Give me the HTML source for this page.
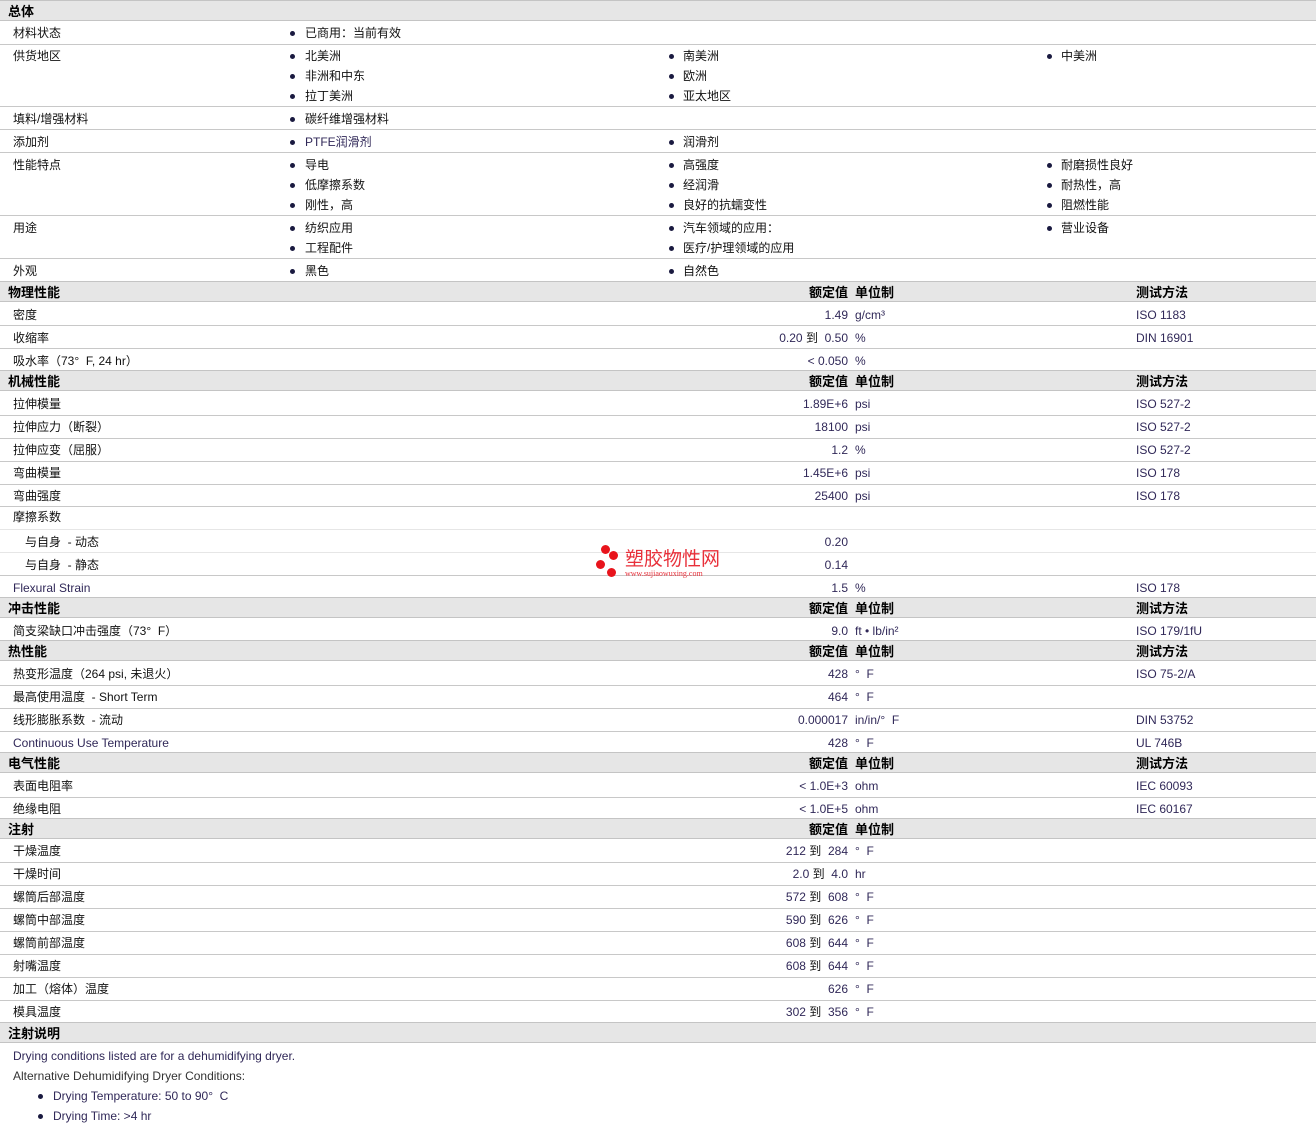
<!DOCTYPE html>
<html><head><meta charset="utf-8">
<style>
*{margin:0;padding:0;box-sizing:border-box}
body{width:1316px;height:1126px;background:#fff;position:relative;overflow:hidden;font-family:"Liberation Sans","Noto Sans CJK SC",sans-serif;font-size:12px;color:#111}
.h{position:absolute;left:0;width:1316px;height:21px;background:#e6e6e6;border-top:1px solid #c4c4c4;border-bottom:1px solid #c4c4c4}
.l{position:absolute;left:0;width:1316px;height:0;border-top:1px solid #c8c8c8}
.ll{position:absolute;left:0;width:1316px;height:0;border-top:1px solid #e6e6e6}
.t{position:absolute;line-height:14px;white-space:nowrap;margin-top:1px}
.b{font-weight:bold;font-size:13px;color:#000}
.v{color:#302858}
.r{text-align:right;right:468px}
.u{left:855px;color:#302858}
.m{left:1136px;color:#302858}
.bl{position:absolute;width:5px;height:5px;border-radius:50%;background:#1a1a40;margin-top:1px}
</style></head><body>
<div class="h" style="top:0"></div>
<div class="t b" style="top:4px;left:8px">总体</div>

<div class="t" style="top:25px;left:13px">材料状态</div>
<div class="bl" style="top:30px;left:290px"></div><div class="t" style="top:25px;left:305px">已商用：当前有效</div>
<div class="l" style="top:44px"></div>
<div class="t" style="top:48px;left:13px">供货地区</div>
<div class="bl" style="top:53px;left:290px"></div><div class="t" style="top:48px;left:305px">北美洲</div>
<div class="bl" style="top:73px;left:290px"></div><div class="t" style="top:68px;left:305px">非洲和中东</div>
<div class="bl" style="top:93px;left:290px"></div><div class="t" style="top:88px;left:305px">拉丁美洲</div>
<div class="bl" style="top:53px;left:669px"></div><div class="t" style="top:48px;left:683px">南美洲</div>
<div class="bl" style="top:73px;left:669px"></div><div class="t" style="top:68px;left:683px">欧洲</div>
<div class="bl" style="top:93px;left:669px"></div><div class="t" style="top:88px;left:683px">亚太地区</div>
<div class="bl" style="top:53px;left:1047px"></div><div class="t" style="top:48px;left:1061px">中美洲</div>
<div class="l" style="top:106px"></div>
<div class="t" style="top:111px;left:13px">填料/增强材料</div>
<div class="bl" style="top:116px;left:290px"></div><div class="t" style="top:111px;left:305px">碳纤维增强材料</div>
<div class="l" style="top:129px"></div>
<div class="t" style="top:134px;left:13px">添加剂</div>
<div class="bl" style="top:139px;left:290px"></div><div class="t v" style="top:134px;left:305px">PTFE润滑剂</div>
<div class="bl" style="top:139px;left:669px"></div><div class="t" style="top:134px;left:683px">润滑剂</div>
<div class="l" style="top:152px"></div>
<div class="t" style="top:157px;left:13px">性能特点</div>
<div class="bl" style="top:162px;left:290px"></div><div class="t" style="top:157px;left:305px">导电</div>
<div class="bl" style="top:182px;left:290px"></div><div class="t" style="top:177px;left:305px">低摩擦系数</div>
<div class="bl" style="top:202px;left:290px"></div><div class="t" style="top:197px;left:305px">刚性，高</div>
<div class="bl" style="top:162px;left:669px"></div><div class="t" style="top:157px;left:683px">高强度</div>
<div class="bl" style="top:182px;left:669px"></div><div class="t" style="top:177px;left:683px">经润滑</div>
<div class="bl" style="top:202px;left:669px"></div><div class="t" style="top:197px;left:683px">良好的抗蠕变性</div>
<div class="bl" style="top:162px;left:1047px"></div><div class="t" style="top:157px;left:1061px">耐磨损性良好</div>
<div class="bl" style="top:182px;left:1047px"></div><div class="t" style="top:177px;left:1061px">耐热性，高</div>
<div class="bl" style="top:202px;left:1047px"></div><div class="t" style="top:197px;left:1061px">阻燃性能</div>
<div class="l" style="top:215px"></div>
<div class="t" style="top:220px;left:13px">用途</div>
<div class="bl" style="top:225px;left:290px"></div><div class="t" style="top:220px;left:305px">纺织应用</div>
<div class="bl" style="top:245px;left:290px"></div><div class="t" style="top:240px;left:305px">工程配件</div>
<div class="bl" style="top:225px;left:669px"></div><div class="t" style="top:220px;left:683px">汽车领域的应用：</div>
<div class="bl" style="top:245px;left:669px"></div><div class="t" style="top:240px;left:683px">医疗/护理领域的应用</div>
<div class="bl" style="top:225px;left:1047px"></div><div class="t" style="top:220px;left:1061px">营业设备</div>
<div class="l" style="top:258px"></div>
<div class="t" style="top:263px;left:13px">外观</div>
<div class="bl" style="top:268px;left:290px"></div><div class="t" style="top:263px;left:305px">黑色</div>
<div class="bl" style="top:268px;left:669px"></div><div class="t" style="top:263px;left:683px">自然色</div>

<div class="h" style="top:281px"></div>
<div class="t b" style="top:285px;left:8px">物理性能</div>
<div class="t b r" style="top:285px">额定值</div><div class="t b" style="top:285px;left:855px">单位制</div><div class="t b" style="top:285px;left:1136px">测试方法</div>
<div class="t" style="top:307px;left:13px">密度</div><div class="t v r" style="top:307px">1.49</div><div class="t u" style="top:307px">g/cm³</div><div class="t m" style="top:307px">ISO 1183</div>
<div class="l" style="top:325px"></div>
<div class="t" style="top:330px;left:13px">收缩率</div><div class="t v r" style="top:330px">0.20 <span style="color:#111">到</span>&nbsp; 0.50</div><div class="t u" style="top:330px">%</div><div class="t m" style="top:330px">DIN 16901</div>
<div class="l" style="top:348px"></div>
<div class="t" style="top:353px;left:13px">吸水率（73°&nbsp; F, 24 hr）</div><div class="t v r" style="top:353px">&lt; 0.050</div><div class="t u" style="top:353px">%</div>

<div class="h" style="top:370px"></div>
<div class="t b" style="top:374px;left:8px">机械性能</div>
<div class="t b r" style="top:374px">额定值</div><div class="t b" style="top:374px;left:855px">单位制</div><div class="t b" style="top:374px;left:1136px">测试方法</div>
<div class="t" style="top:396px;left:13px">拉伸模量</div><div class="t v r" style="top:396px">1.89E+6</div><div class="t u" style="top:396px">psi</div><div class="t m" style="top:396px">ISO 527-2</div>
<div class="l" style="top:415px"></div>
<div class="t" style="top:419px;left:13px">拉伸应力（断裂）</div><div class="t v r" style="top:419px">18100</div><div class="t u" style="top:419px">psi</div><div class="t m" style="top:419px">ISO 527-2</div>
<div class="l" style="top:438px"></div>
<div class="t" style="top:442px;left:13px">拉伸应变（屈服）</div><div class="t v r" style="top:442px">1.2</div><div class="t u" style="top:442px">%</div><div class="t m" style="top:442px">ISO 527-2</div>
<div class="l" style="top:461px"></div>
<div class="t" style="top:465px;left:13px">弯曲模量</div><div class="t v r" style="top:465px">1.45E+6</div><div class="t u" style="top:465px">psi</div><div class="t m" style="top:465px">ISO 178</div>
<div class="l" style="top:484px"></div>
<div class="t" style="top:488px;left:13px">弯曲强度</div><div class="t v r" style="top:488px">25400</div><div class="t u" style="top:488px">psi</div><div class="t m" style="top:488px">ISO 178</div>
<div class="l" style="top:506px"></div>
<div class="t" style="top:509px;left:13px">摩擦系数</div>
<div class="ll" style="top:529px"></div>
<div class="t" style="top:534px;left:25px">与自身&nbsp; - 动态</div><div class="t v r" style="top:534px">0.20</div>
<div class="ll" style="top:552px"></div>
<div class="t" style="top:557px;left:25px">与自身&nbsp; - 静态</div><div class="t v r" style="top:557px">0.14</div>
<div class="l" style="top:575px"></div>
<div class="t v" style="top:580px;left:13px">Flexural Strain</div><div class="t v r" style="top:580px">1.5</div><div class="t u" style="top:580px">%</div><div class="t m" style="top:580px">ISO 178</div>

<div class="h" style="top:597px"></div>
<div class="t b" style="top:601px;left:8px">冲击性能</div>
<div class="t b r" style="top:601px">额定值</div><div class="t b" style="top:601px;left:855px">单位制</div><div class="t b" style="top:601px;left:1136px">测试方法</div>
<div class="t" style="top:623px;left:13px">简支梁缺口冲击强度（73°&nbsp; F）</div><div class="t v r" style="top:623px">9.0</div><div class="t u" style="top:623px">ft • lb/in²</div><div class="t m" style="top:623px">ISO 179/1fU</div>

<div class="h" style="top:640px"></div>
<div class="t b" style="top:644px;left:8px">热性能</div>
<div class="t b r" style="top:644px">额定值</div><div class="t b" style="top:644px;left:855px">单位制</div><div class="t b" style="top:644px;left:1136px">测试方法</div>
<div class="t" style="top:666px;left:13px">热变形温度（264 psi, 未退火）</div><div class="t v r" style="top:666px">428</div><div class="t u" style="top:666px">°&nbsp; F</div><div class="t m" style="top:666px">ISO 75-2/A</div>
<div class="l" style="top:685px"></div>
<div class="t" style="top:689px;left:13px">最高使用温度&nbsp; - Short Term</div><div class="t v r" style="top:689px">464</div><div class="t u" style="top:689px">°&nbsp; F</div>
<div class="l" style="top:708px"></div>
<div class="t" style="top:712px;left:13px">线形膨胀系数&nbsp; - 流动</div><div class="t v r" style="top:712px">0.000017</div><div class="t u" style="top:712px">in/in/°&nbsp; F</div><div class="t m" style="top:712px">DIN 53752</div>
<div class="l" style="top:731px"></div>
<div class="t v" style="top:735px;left:13px">Continuous Use Temperature</div><div class="t v r" style="top:735px">428</div><div class="t u" style="top:735px">°&nbsp; F</div><div class="t m" style="top:735px">UL 746B</div>

<div class="h" style="top:752px"></div>
<div class="t b" style="top:756px;left:8px">电气性能</div>
<div class="t b r" style="top:756px">额定值</div><div class="t b" style="top:756px;left:855px">单位制</div><div class="t b" style="top:756px;left:1136px">测试方法</div>
<div class="t" style="top:778px;left:13px">表面电阻率</div><div class="t v r" style="top:778px">&lt; 1.0E+3</div><div class="t u" style="top:778px">ohm</div><div class="t m" style="top:778px">IEC 60093</div>
<div class="l" style="top:797px"></div>
<div class="t" style="top:801px;left:13px">绝缘电阻</div><div class="t v r" style="top:801px">&lt; 1.0E+5</div><div class="t u" style="top:801px">ohm</div><div class="t m" style="top:801px">IEC 60167</div>

<div class="h" style="top:818px"></div>
<div class="t b" style="top:822px;left:8px">注射</div>
<div class="t b r" style="top:822px">额定值</div><div class="t b" style="top:822px;left:855px">单位制</div>
<div class="t" style="top:843px;left:13px">干燥温度</div><div class="t v r" style="top:843px">212 <span style="color:#111">到</span>&nbsp; 284</div><div class="t u" style="top:843px">°&nbsp; F</div>
<div class="l" style="top:862px"></div>
<div class="t" style="top:866px;left:13px">干燥时间</div><div class="t v r" style="top:866px">2.0 <span style="color:#111">到</span>&nbsp; 4.0</div><div class="t u" style="top:866px">hr</div>
<div class="l" style="top:885px"></div>
<div class="t" style="top:889px;left:13px">螺筒后部温度</div><div class="t v r" style="top:889px">572 <span style="color:#111">到</span>&nbsp; 608</div><div class="t u" style="top:889px">°&nbsp; F</div>
<div class="l" style="top:908px"></div>
<div class="t" style="top:912px;left:13px">螺筒中部温度</div><div class="t v r" style="top:912px">590 <span style="color:#111">到</span>&nbsp; 626</div><div class="t u" style="top:912px">°&nbsp; F</div>
<div class="l" style="top:931px"></div>
<div class="t" style="top:935px;left:13px">螺筒前部温度</div><div class="t v r" style="top:935px">608 <span style="color:#111">到</span>&nbsp; 644</div><div class="t u" style="top:935px">°&nbsp; F</div>
<div class="l" style="top:954px"></div>
<div class="t" style="top:958px;left:13px">射嘴温度</div><div class="t v r" style="top:958px">608 <span style="color:#111">到</span>&nbsp; 644</div><div class="t u" style="top:958px">°&nbsp; F</div>
<div class="l" style="top:977px"></div>
<div class="t" style="top:981px;left:13px">加工（熔体）温度</div><div class="t v r" style="top:981px">626</div><div class="t u" style="top:981px">°&nbsp; F</div>
<div class="l" style="top:1000px"></div>
<div class="t" style="top:1004px;left:13px">模具温度</div><div class="t v r" style="top:1004px">302 <span style="color:#111">到</span>&nbsp; 356</div><div class="t u" style="top:1004px">°&nbsp; F</div>

<div class="h" style="top:1022px"></div>
<div class="t b" style="top:1026px;left:8px">注射说明</div>
<div class="t v" style="top:1048px;left:13px">Drying conditions listed are for a dehumidifying dryer.</div>
<div class="t" style="top:1068px;left:13px;color:#333">Alternative Dehumidifying Dryer Conditions:</div>
<div class="bl" style="top:1093px;left:38px"></div><div class="t v" style="top:1088px;left:53px">Drying Temperature: 50 to 90°&nbsp; C</div>
<div class="bl" style="top:1113px;left:38px"></div><div class="t v" style="top:1108px;left:53px">Drying Time: &gt;4 hr</div>

<div style="position:absolute;left:601px;top:545px;width:9px;height:9px;border-radius:50%;background:#e8141c"></div>
<div style="position:absolute;left:609px;top:551px;width:9px;height:9px;border-radius:50%;background:#e8141c"></div>
<div style="position:absolute;left:596px;top:560px;width:9px;height:9px;border-radius:50%;background:#e8141c"></div>
<div style="position:absolute;left:607px;top:568px;width:9px;height:9px;border-radius:50%;background:#e8141c"></div>
<div class="t" style="top:549px;left:625px;font-size:19px;line-height:20px;color:#e8303a">塑胶物性网</div>
<div class="t" style="top:568px;left:625px;font-size:8px;line-height:9px;color:#e8303a;font-family:'Liberation Serif',serif">www.sujiaowuxing.com</div>
</body></html>
